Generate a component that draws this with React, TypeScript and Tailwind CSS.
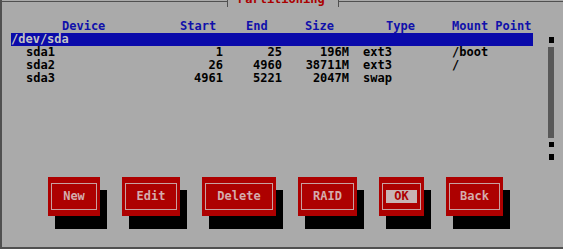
import React from 'react';

const LINE = 'bg-[#505050]';

const parts = [
  { dev: 'sda1', start: '1', end: '25', size: '196M', type: 'ext3', mount: '/boot' },
  { dev: 'sda2', start: '26', end: '4960', size: '38711M', type: 'ext3', mount: '/' },
  { dev: 'sda3', start: '4961', end: '5221', size: '2047M', type: 'swap', mount: '' },
];

const buttons = [
  { label: 'New', w: 'w-[52px]' },
  { label: 'Edit', w: 'w-[58px]' },
  { label: 'Delete', w: 'w-[74px]' },
  { label: 'RAID', w: 'w-[59px]' },
  { label: 'OK', w: 'w-[45px]', focused: true },
  { label: 'Back', w: 'w-[57px]' },
];

const Button: React.FC<{ label: string; w: string; focused?: boolean }> = ({ label, w, focused }) => (
  <div className={`${w} h-[39px] bg-[#ad0000] px-[3px] py-[6px] shadow-[7px_13px_0_0_#000]`}>
    <div className="h-full border border-[#c8a0a0] flex items-center justify-center">
      {focused ? (
        <span className="bg-[#c8b4b4] text-[#ad0000] px-[8px]">{label}</span>
      ) : (
        <span className="text-[#d4acac]">{label}</span>
      )}
    </div>
  </div>
);

const PartRow: React.FC<{ p: (typeof parts)[number] }> = ({ p }) => (
  <div className="flex h-[13px] text-black whitespace-pre">
    <span className="w-[169px] pl-[15px]">{p.dev}</span>
    <span className="w-[43px] text-right">{p.start}</span>
    <span className="w-[59px] text-right">{p.end}</span>
    <span className="w-[67px] text-right">{p.size}</span>
    <span className="w-[103px] pl-[14px]">{p.type}</span>
    <span className="w-[81px]">{p.mount}</span>
  </div>
);

export default function App() {
  return (
    <div className="w-[563px] h-[249px] overflow-hidden bg-[#aaaaaa] font-['DejaVu_Sans_Mono','Liberation_Mono',monospace] font-bold text-[12px] leading-[13px]">
      <div className="h-full flex flex-col border-l-2 border-b-2 border-[#505050]">
        {/* window top edge with title (title row sits mostly above the crop) */}
        <div className="flex h-[8px] items-start">
          <div className={`w-[225px] h-px mt-px ${LINE}`} />
          <div className={`w-px h-[7px] ${LINE}`} />
          <div className="w-[110px] pl-[10px]">
            <span className="block -mt-[7px] text-[#aa0000] whitespace-pre">Partitioning</span>
          </div>
          <div className={`w-px h-[7px] ${LINE}`} />
          <div className={`flex-1 h-px mt-px ${LINE}`} />
        </div>

        {/* column headings */}
        <div className="mt-[12px] pl-[9px] flex h-[13px] text-[#1010aa] whitespace-pre">
          <span className="w-[169px] pl-[51px]">Device</span>
          <span className="w-[43px]">Start</span>
          <span className="w-[59px] pl-[23px]">End</span>
          <span className="w-[67px] pl-[23px]">Size</span>
          <span className="w-[103px] pl-[37px]">Type</span>
          <span className="w-[81px]">Mount Point</span>
        </div>

        {/* listbox */}
        <div className="h-[144px] pl-[9px] flex">
          <div className="w-[522px]">
            <div className="h-[13px] bg-[#0a0aaa] text-[#c4c4c4]">/dev/sda</div>
            {parts.map((p) => (
              <PartRow key={p.dev} p={p} />
            ))}
          </div>
          <div className="ml-[15px] w-[6px] flex flex-col items-center">
            <div className="mt-[4px] w-[5px] h-[6px] bg-black" />
            <div className="mt-[4px] w-[6px] h-[91px] bg-[#585858]" />
            <div className="mt-[4px] w-[5px] h-[5px] bg-black" />
            <div className="mt-[7px] w-[5px] h-[6px] bg-black" />
          </div>
        </div>

        {/* buttons */}
        <div className="pl-[46px] flex gap-[22px]">
          {buttons.map((b) => (
            <Button key={b.label} {...b} />
          ))}
        </div>
      </div>
    </div>
  );
}
